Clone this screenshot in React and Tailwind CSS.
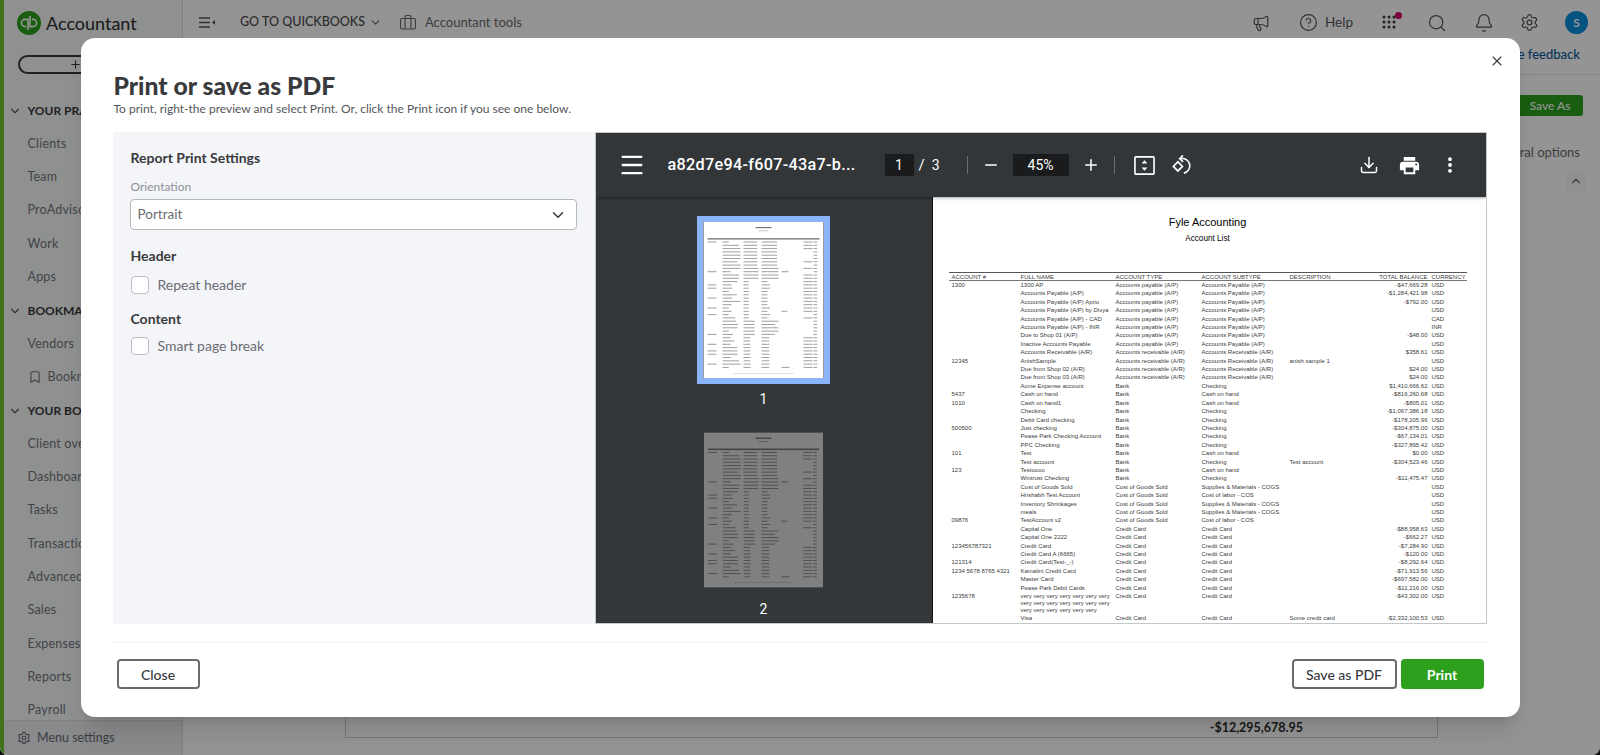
import { Bell, Bookmark, Briefcase, ChevronDown, ChevronUp, CircleHelp, Download, EllipsisVertical, Megaphone, Menu, Minus, Plus, Search, Settings, X } from 'lucide-react'

const navGroups = [
  { title: 'YOUR PRACTICE', items: ['Clients', 'Team', 'ProAdvisor', 'Work', 'Apps'] },
  { title: 'BOOKMARKS', items: ['Vendors', 'Bookmarks'] },
  { title: 'YOUR BOOKS', items: ['Client overview', 'Dashboards', 'Tasks', 'Transactions', 'Advanced', 'Sales', 'Expenses', 'Reports', 'Payroll'] },
]

const AP = 'Accounts payable (A/P)'
const APS = 'Accounts Payable (A/P)'
const AR = 'Accounts receivable (A/R)'
const ARS = 'Accounts Receivable (A/R)'
const COGS = 'Cost of Goods Sold'
const SUP = 'Supplies & Materials - COGS'
const LAB = 'Cost of labor - COS'
const CC = 'Credit Card'
const VERY = 'very very very very very very very very very very very very very very very very very very very very'

// number, name, type, subtype, description, balance, currency
const rows = [
  ['1300', '1300 AP', AP, APS, '', '-$47,669.28', 'USD'],
  ['', 'Accounts Payable (A/P)', AP, APS, '', '-$1,284,421.98', 'USD'],
  ['', 'Accounts Payable (A/P) Aprio', AP, APS, '', '-$792.00', 'USD'],
  ['', 'Accounts Payable (A/P) by Divya', AP, APS, '', '', 'USD'],
  ['', 'Accounts Payable (A/P) - CAD', AP, APS, '', '', 'CAD'],
  ['', 'Accounts Payable (A/P) - INR', AP, APS, '', '', 'INR'],
  ['', 'Due to Shop 01 (A/P)', AP, APS, '', '-$48.00', 'USD'],
  ['', 'Inactive Accounts Payable', AP, APS, '', '', 'USD'],
  ['', 'Accounts Receivable (A/R)', AR, ARS, '', '$358.61', 'USD'],
  ['12345', 'AnishSample', AR, ARS, 'anish sample 1', '', 'USD'],
  ['', 'Due from Shop 02 (A/R)', AR, ARS, '', '$24.00', 'USD'],
  ['', 'Due from Shop 03 (A/R)', AR, ARS, '', '$24.00', 'USD'],
  ['', 'Acme Expense account', 'Bank', 'Checking', '', '$1,410,666.62', 'USD'],
  ['5437', 'Cash on hand', 'Bank', 'Cash on hand', '', '-$816,260.68', 'USD'],
  ['1010', 'Cash on hand1', 'Bank', 'Cash on hand', '', '-$805.01', 'USD'],
  ['', 'Checking', 'Bank', 'Checking', '', '-$1,067,386.18', 'USD'],
  ['', 'Debit Card checking', 'Bank', 'Checking', '', '-$178,205.96', 'USD'],
  ['500500', 'Just checking', 'Bank', 'Checking', '', '-$304,875.00', 'USD'],
  ['', 'Pease Park Checking Account', 'Bank', 'Checking', '', '-$67,134.01', 'USD'],
  ['', 'PPC Checking', 'Bank', 'Checking', '', '-$327,895.42', 'USD'],
  ['101', 'Test', 'Bank', 'Cash on hand', '', '$0.00', 'USD'],
  ['', 'Test account', 'Bank', 'Checking', 'Test account', '-$304,523.46', 'USD'],
  ['123', 'Testoooo', 'Bank', 'Cash on hand', '', '', 'USD'],
  ['', 'Wintrust Checking', 'Bank', 'Checking', '', '-$11,475.47', 'USD'],
  ['', 'Cost of Goods Sold', COGS, SUP, '', '', 'USD'],
  ['', 'Hrishabh Test Account', COGS, LAB, '', '', 'USD'],
  ['', 'Inventory Shrinkages', COGS, SUP, '', '', 'USD'],
  ['', 'meals', COGS, SUP, '', '', 'USD'],
  ['09876', 'TestAccount v2', COGS, LAB, '', '', 'USD'],
  ['', 'Capital One', CC, CC, '', '-$88,958.63', 'USD'],
  ['', 'Capital One 2222', CC, CC, '', '-$662.27', 'USD'],
  ['123456787321', 'Credit Card', CC, CC, '', '-$7,284.90', 'USD'],
  ['', 'Credit Card A (6665)', CC, CC, '', '-$120.00', 'USD'],
  ['121314', 'Credit Card(Test-_-)', CC, CC, '', '-$8,292.64', 'USD'],
  ['1234 5678 8765 4321', 'Kamalini Credit Card', CC, CC, '', '-$71,913.56', 'USD'],
  ['', 'Master Card', CC, CC, '', '-$697,582.00', 'USD'],
  ['', 'Pease Park Debit Cards', CC, CC, '', '-$11,216.00', 'USD'],
  ['1235678', VERY, CC, CC, '', '-$43,302.00', 'USD'],
  ['', 'Visa', CC, CC, 'Some credit card', '-$2,332,100.53', 'USD'],
]

// x and full width of each column inside the 120 wide thumbnail
const thumbCols = [
  [4, 12],
  [19, 18],
  [40, 15],
  [58, 17],
  [78, 12],
  [97, 12],
  [110, 5],
]

// tiny picture of the report used in the page thumbnails
function Thumb() {
  return (
    <svg viewBox="0 0 120 156" className="block w-full h-full">
      <rect width="120" height="156" fill="#fff" />
      <rect x="52" y="5" width="16" height="1.2" fill="#777" />
      <rect x="55" y="8.5" width="10" height="0.7" fill="#aaa" />
      <rect x="4" y="16" width="112" height="1.6" fill="#888" />
      {rows.map((row, i) =>
        thumbCols.map(([x, w], c) => {
          if (!row[c]) return null
          const width = c === 0 || c >= 5 ? w * 0.75 : w * Math.min(1, Math.max(row[c].length / 24, 0.35))
          const left = c === 5 ? x + w - width : x
          return <rect key={c} x={left} y={19.5 + i * 3.3} width={width} height="1" fill="#a0a0a0" />
        })
      )}
      <rect x="30" y="151" width="60" height="0.6" fill="#ccc" />
    </svg>
  )
}

function QbLogo() {
  return (
    <svg viewBox="0 0 24 24" className="w-6 h-6 shrink-0">
      <circle cx="12" cy="12" r="12" fill="#2ca01c" />
      <path d="M11 19V8.4H8a3.6 3.6 0 0 0 0 7.2h1.2M13 5v10.6h3a3.6 3.6 0 0 0 0-7.2h-1.2" fill="none" stroke="#fff" strokeWidth="1.6" />
    </svg>
  )
}

function CollapseIcon() {
  return (
    <svg viewBox="0 0 16 11" className="w-4 h-[11px]" fill="#55565a">
      <path d="M0 1h11M0 5.5h11M0 10h11" stroke="#55565a" strokeWidth="1.3" />
      <path d="M16 3v5l-3-2.5z" />
    </svg>
  )
}

function AppsGrid() {
  const dots = [3, 8, 13]
  return (
    <svg viewBox="0 0 18 18" className="w-[18px] h-[18px]" fill="#3a3b3e">
      {dots.map((y) => dots.map((x) => <circle key={x + '-' + y} cx={x} cy={y} r="1.5" />))}
    </svg>
  )
}

function FitIcon() {
  return (
    <svg viewBox="0 0 22 22" className="w-[21px] h-[21px]" fill="none">
      <rect x="1" y="2" width="20" height="18" rx="1" stroke="#fff" strokeWidth="1.7" />
      <path d="M11 5.5 14 9H8zM11 16.5 8 13h6z" fill="#fff" />
    </svg>
  )
}

function RotateIcon() {
  return (
    <svg viewBox="0 0 24 24" className="w-[22px] h-[22px]" fill="none" stroke="#fff" strokeWidth="1.8">
      <path d="M7.5 8.5 2.5 13.5l5 5 5-5z" />
      <path d="M10.5 5.2a8 8 0 1 1 3.5 15.6" />
      <path d="M13 1.5 9.5 5.2l3.7 3.4" />
    </svg>
  )
}

function PrintIcon() {
  return (
    <svg viewBox="0 0 24 24" className="w-[23px] h-[23px]" fill="#fff">
      <path d="M19 8H5c-1.66 0-3 1.34-3 3v6h4v4h12v-4h4v-6c0-1.66-1.34-3-3-3zm-3 11H8v-5h8v5zm3-7c-.55 0-1-.45-1-1s.45-1 1-1 1 .45 1 1-.45 1-1 1zm-1-9H6v4h12V3z" />
    </svg>
  )
}

function Sidebar() {
  return (
    <aside className="w-[179px] shrink-0 flex flex-col bg-[#f6f8f9] border-r border-[#dcdee0]">
      <div className="h-[55px] shrink-0 flex items-center pl-[13px] gap-[5px] pb-[9px]">
        <QbLogo />
        <span className="text-[18px] text-[#2b2c2e]">Accountant</span>
      </div>
      <div className="pl-[14px] h-[39px] shrink-0">
        <div className="w-[114px] h-[19px] border-2 border-[#393a3d] rounded-full flex items-center justify-center">
          <Plus size={13} className="text-[#393a3d]" />
        </div>
      </div>
      <nav className="flex-1 overflow-hidden">
        {navGroups.map((group) => (
          <div key={group.title}>
            <div className="h-[33.35px] flex items-center pl-[4px] gap-[5.5px] text-[12px] font-bold text-[#393a3d] whitespace-nowrap">
              <ChevronDown size={14} className="shrink-0 text-[#55565a]" />
              {group.title}
            </div>
            {group.items.map((item) => (
              <div key={item} className="h-[33.35px] flex items-center gap-[6px] pl-[23.5px] text-[12.5px] tracking-[0.2px] text-[#74767a] whitespace-nowrap">
                {item === 'Bookmarks' && <Bookmark size={14} className="shrink-0" />}
                {item}
              </div>
            ))}
          </div>
        ))}
      </nav>
      <div className="h-[35px] shrink-0 flex items-center gap-[6px] pl-[13px] text-[12.5px] text-[#6b6c72] bg-[#eceef0] border-t border-[#dcdee0]">
        <Settings size={14} />
        Menu settings
      </div>
    </aside>
  )
}

function TopBar() {
  return (
    <header className="h-[45px] shrink-0 flex items-center bg-white text-[#6b6c72]">
      <div className="ml-[16px]"><CollapseIcon /></div>
      <span className="ml-[25px] text-[12.5px] font-medium text-[#4a4b4f]">GO TO QUICKBOOKS</span>
      <ChevronDown size={13} className="ml-[4px]" />
      <Briefcase size={18} strokeWidth={1.5} className="ml-[17px]" />
      <span className="ml-[8px] text-[13px]">Accountant tools</span>
      <div className="ml-auto flex items-center text-[#55565a]">
        <Megaphone size={18} strokeWidth={1.6} />
        <CircleHelp size={19} strokeWidth={1.5} className="ml-[29px]" />
        <span className="ml-[7px] text-[13.5px]">Help</span>
        <div className="relative ml-[28px]">
          <AppsGrid />
          <span className="absolute -top-[2px] -right-[3px] w-[7px] h-[7px] rounded-full bg-[#d6006e]" />
        </div>
        <Search size={20} strokeWidth={1.5} className="ml-[28px]" />
        <Bell size={20} strokeWidth={1.5} className="ml-[27px]" />
        <Settings size={19} strokeWidth={1.5} className="ml-[26px]" />
        <span className="ml-[26px] mr-[12px] w-[23px] h-[23px] rounded-full bg-[#0a8fdc] text-white text-[12px] font-bold flex items-center justify-center">S</span>
      </div>
    </header>
  )
}

function Backdrop() {
  return (
    <div className="flex h-full border-l-4 border-[#6cc72e] bg-white">
      <Sidebar />
      <main className="flex-1 min-w-0 flex flex-col">
        <TopBar />
        <div className="h-[30px] shrink-0 border-b border-[#e3e5e8] flex items-center justify-end pr-[20px] pb-[9px] text-[13px] font-medium text-[#0a5a9c]">
          Give feedback
        </div>
        <div className="flex justify-end pr-[17px] pt-[20px]">
          <span className="w-[66px] h-[21px] rounded-[3px] bg-[#2ca01c] text-white text-[12px] font-medium flex items-center justify-center">Save As</span>
        </div>
        <div className="flex justify-end pr-[20px] pt-[27px] text-[13px] text-[#6b6c72]">General options</div>
        <div className="flex justify-end pr-[14px] pt-[8px]">
          <span className="w-[20px] h-[20px] rounded-[3px] bg-[#f7f8f9] flex items-center justify-center">
            <ChevronUp size={14} className="text-[#6b6c72]" />
          </span>
        </div>
        <div className="mt-auto mb-[17px] ml-[162px] w-[1093px] h-[30px] border border-[#c9cbcf] flex items-end justify-end pr-[134px] pb-[1px] text-[12.5px] leading-[16px] font-bold text-[#2b2c2e]">
          -$12,295,678.95
        </div>
      </main>
    </div>
  )
}

function Checkbox({ label }) {
  return (
    <label className="flex items-center gap-[9px] text-[14px] text-[#6b6c72]">
      <span className="ml-[1px] w-[18px] h-[18px] rounded-[4px] border border-[#babec5] bg-white" />
      {label}
    </label>
  )
}

function SettingsPanel() {
  return (
    <section className="w-[482px] shrink-0 bg-[#f4f5f8] pl-[17px] pr-[18px] pt-[17px]">
      <h2 className="ml-px text-[14px] leading-[18px] font-bold text-[#393a3d]">Report Print Settings</h2>
      <div className="ml-px mt-[12px] text-[12px] leading-[16px] text-[#8d9096]">Orientation</div>
      <div className="mt-[4px] h-[31px] flex items-center justify-between pl-[7px] pr-[9px] bg-white border border-[#b5b8bd] rounded-[4px] text-[13.5px] text-[#6b6c72]">
        Portrait
        <ChevronDown size={18} className="text-[#393a3d]" />
      </div>
      <h3 className="ml-px mt-[16px] text-[14px] leading-[20px] font-bold text-[#393a3d]">Header</h3>
      <div className="mt-[8px]"><Checkbox label="Repeat header" /></div>
      <h3 className="ml-px mt-[14px] text-[14px] leading-[20px] font-bold text-[#393a3d]">Content</h3>
      <div className="mt-[6px]"><Checkbox label="Smart page break" /></div>
    </section>
  )
}

function PdfToolbar() {
  return (
    <div className="h-[64px] shrink-0 flex items-center bg-[#323639] text-white font-['Roboto',sans-serif] shadow-[0_1px_3px_rgba(0,0,0,0.35)] relative z-10">
      <Menu size={28} strokeWidth={2} className="ml-[22px]" />
      <span className="ml-[22px] w-[190px] text-[16.2px] font-medium tracking-[0.3px] whitespace-nowrap">a82d7e94-f607-43a7-b...</span>
      <span className="ml-[27px] w-[29px] h-[22px] bg-[#191b1c] flex items-center justify-center text-[14px]">1</span>
      <span className="ml-[5px] text-[15px]">/</span>
      <span className="ml-[7px] text-[14px]">3</span>
      <span className="ml-[27px] w-px h-[18px] bg-[#6b6e71]" />
      <Minus size={18} className="ml-[14px]" />
      <span className="ml-[13px] w-[56px] h-[22px] bg-[#191b1c] flex items-center justify-center text-[14px]">45%</span>
      <Plus size={18} className="ml-[13px]" />
      <span className="ml-[14px] w-px h-[18px] bg-[#6b6e71]" />
      <div className="ml-[19px]"><FitIcon /></div>
      <div className="ml-[16px]"><RotateIcon /></div>
      <Download size={20} strokeWidth={1.8} className="ml-auto" />
      <div className="ml-[19px]"><PrintIcon /></div>
      <EllipsisVertical size={20} strokeWidth={2.6} className="ml-[19px] mr-[26px]" />
    </div>
  )
}

function ThumbRail() {
  return (
    <div className="w-[336px] shrink-0 flex flex-col items-center bg-[#33373a] pt-[19px] font-['Roboto',sans-serif] text-white text-[14px]">
      <div className="w-[133px] h-[168px] border-[6px] border-[#8ab4f8]"><Thumb /></div>
      <div className="mt-[5px] leading-[20px]">1</div>
      <div className="mt-[23px] w-[119px] h-[156px] brightness-50"><Thumb /></div>
      <div className="mt-[11px] leading-[20px]">2</div>
    </div>
  )
}

function ReportPage() {
  return (
    <div className="flex-1 min-w-0 overflow-hidden bg-white font-['Liberation_Sans',sans-serif] text-[6px] leading-[8.4px] text-[#3c3c3c]">
      <div className="mt-[18px] text-center text-[11px] leading-[14px] text-black pr-[3px]">Fyle Accounting</div>
      <div className="mt-[5px] text-center text-[8.2px] leading-[10px] text-black pr-[3px]">Account List</div>
      <div className="ml-[16px] mr-[19px] mt-[28px] border-t border-[#555] border-b border-b-[#777] h-[9px] pl-[3px] grid grid-cols-[69px_95px_86px_88px_70px_68px_1fr] items-center">
        <span>ACCOUNT #</span>
        <span>FULL NAME</span>
        <span>ACCOUNT TYPE</span>
        <span>ACCOUNT SUBTYPE</span>
        <span>DESCRIPTION</span>
        <span className="text-right whitespace-nowrap">TOTAL BALANCE</span>
        <span className="pl-[4px]">CURRENCY</span>
      </div>
      <div className="ml-[16px] mr-[19px] pl-[3px]">
        {rows.map((row) => (
          <div key={row[1]} className="grid grid-cols-[69px_95px_86px_88px_70px_68px_1fr]">
            <span className="whitespace-nowrap">{row[0]}</span>
            {row[1] === VERY ? (
              <span className="pr-[2px] pt-[1px] leading-[7px]">{row[1]}</span>
            ) : (
              <span className="pr-[2px] whitespace-nowrap">{row[1]}</span>
            )}
            <span>{row[2]}</span>
            <span>{row[3]}</span>
            <span>{row[4]}</span>
            <span className="text-right whitespace-nowrap">{row[5]}</span>
            <span className="pl-[4px]">{row[6]}</span>
          </div>
        ))}
      </div>
    </div>
  )
}

function PdfViewer() {
  return (
    <section className="flex-1 min-w-0 flex flex-col border border-[#c4c6c8] overflow-hidden">
      <PdfToolbar />
      <div className="flex-1 min-h-0 flex overflow-hidden">
        <ThumbRail />
        <div className="w-[1px] bg-[#111]" />
        <ReportPage />
      </div>
    </section>
  )
}

function Modal() {
  return (
    <div className="w-[1439px] h-[679px] bg-white rounded-[14px] shadow-xl flex flex-col relative text-[#393a3d]">
      <button className="absolute top-[15px] right-[15px] text-[#393a3d]">
        <X size={16} strokeWidth={1.6} />
      </button>
      <div className="px-[33px] pt-[33px] h-[94px] shrink-0">
        <h1 className="text-[24.7px] leading-[30px] font-black">Print or save as PDF</h1>
        <p className="text-[12px] leading-[16px] text-[#55565a]">To print, right-the preview and select Print. Or, click the Print icon if you see one below.</p>
      </div>
      <div className="ml-[32px] mr-[33px] h-[492px] shrink-0 flex">
        <SettingsPanel />
        <PdfViewer />
      </div>
      <div className="ml-[32px] mr-[33px] mt-[18px] pt-[16px] border-t border-[#f1f2f4] flex justify-between pl-[4px] pr-[3px]">
        <button className="w-[83px] h-[30px] border-2 border-[#6b6c72] rounded-[4px] text-[14px] font-medium text-[#393a3d]">Close</button>
        <div className="flex gap-[4px]">
          <button className="w-[105px] h-[30px] border-2 border-[#6b6c72] rounded-[4px] text-[14px] font-medium text-[#393a3d]">Save as PDF</button>
          <button className="w-[83px] h-[30px] rounded-[4px] bg-[#2ca01c] text-[14px] font-bold text-white">Print</button>
        </div>
      </div>
    </div>
  )
}

export default function App() {
  return (
    <div className="h-[755px] bg-[#111] font-['Lato',sans-serif]">
      <div className="relative h-full overflow-hidden rounded-b-[8px]">
        <Backdrop />
        <div className="absolute inset-0 bg-black/[0.42] flex items-center justify-center">
          <Modal />
        </div>
      </div>
    </div>
  )
}
